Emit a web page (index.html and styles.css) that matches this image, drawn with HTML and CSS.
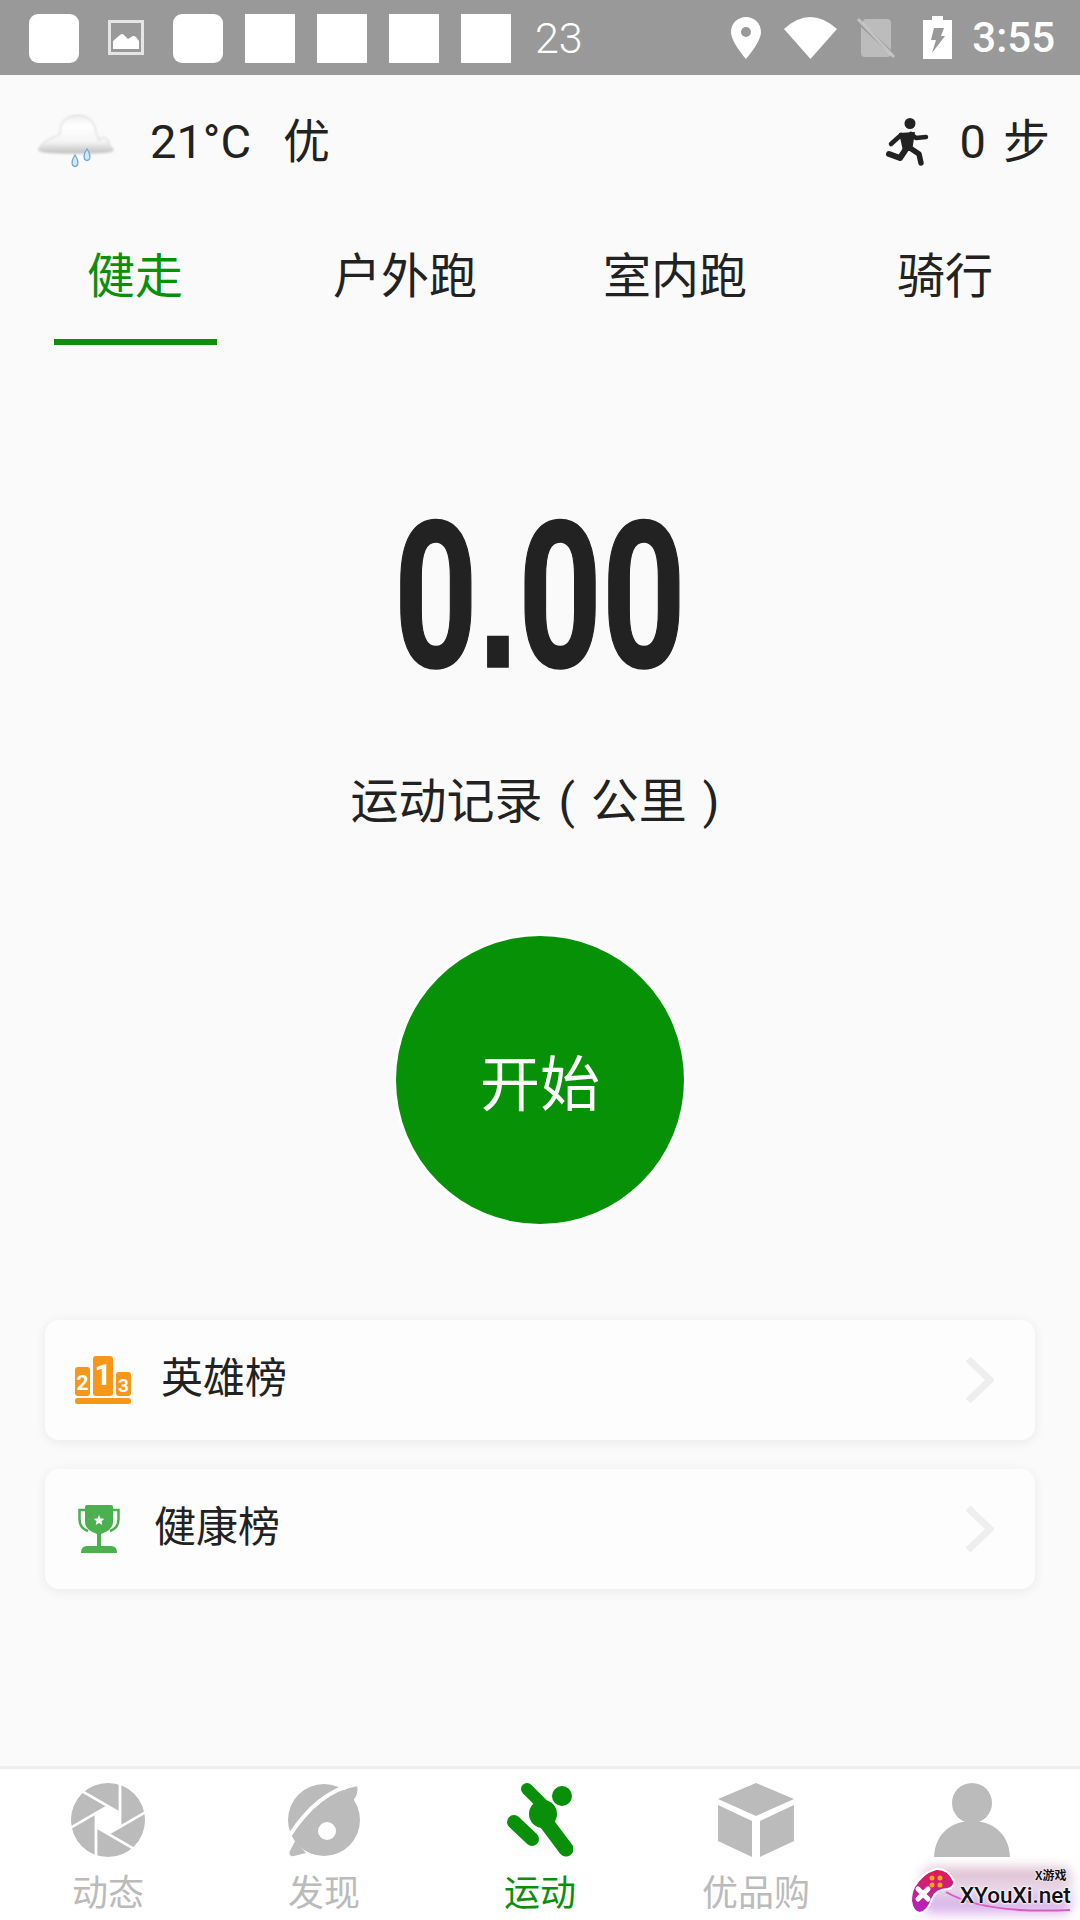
FILE: index.html
```html
<!DOCTYPE html>
<html lang="zh">
<head>
<meta charset="utf-8">
<title>运动</title>
<link rel="stylesheet" href="styles.css">
</head>
<body>
<div class="app">
  <header class="status">
    <div class="notifs">
      <span class="nbox round"></span>
      <svg class="nimg" viewBox="0 0 36 35"><rect x="1.500" y="1.500" width="33" height="32" fill="none" stroke="#fff" stroke-opacity=".75" stroke-width="3"/><path d="M5 29V21L12 15Q14 13 16 15L20 19L24 16.500Q26 15.500 28 17L31 21V29Z" fill="#fff"/></svg>
      <span class="nbox round"></span>
      <span class="nbox"></span><span class="nbox"></span><span class="nbox"></span><span class="nbox"></span>
      <span class="ncount">23</span>
    </div>
    <div class="sys">
      <svg class="pin" viewBox="0 0 30 42"><path fill-rule="evenodd" d="M15 0C6.700 0 0 6.600 0 15C0 25 15 42 15 42S30 25 30 15C30 6.600 23.300 0 15 0ZM15 10A5 5 0 1 1 15 20A5 5 0 1 1 15 10Z" fill="#fff"/></svg>
      <svg class="wifi" viewBox="0 0 53 42"><path d="M0 12Q26 -12 53 12L26.500 42Z" fill="#fff"/></svg>
      <svg class="nosim" viewBox="0 0 40 42"><path d="M7 5Q7 2 10 2H31Q35 2 35 6V33L7 6ZM5 10L35 38Q34 40 31 40H9Q5 40 5 36Z" fill="#fff" fill-opacity=".35"/><path d="M2 2L38 40" stroke="#fff" stroke-opacity=".4" stroke-width="3"/></svg>
      <svg class="batt" viewBox="0 0 29 43"><path d="M9 0H20V4H29V43H0V4H9Z" fill="#fff"/><path d="M11 12H21L18 20H22L9 37L13 24H8Z" fill="#999"/></svg>
      <span class="clock">3:55</span>
    </div>
  </header>

  <main class="main">
    <section class="info">
      <div class="info-left">
        <svg class="cloud" viewBox="0 0 78 57">
          <defs>
            <linearGradient id="cg" gradientUnits="userSpaceOnUse" x1="0" y1="0" x2="0" y2="40"><stop offset="0" stop-color="#ececec"/><stop offset=".3" stop-color="#fff"/><stop offset=".7" stop-color="#f4f4f4"/><stop offset="1" stop-color="#bdbdbd"/></linearGradient>
            <filter id="cb" x="-10%" y="-10%" width="120%" height="120%"><feGaussianBlur stdDeviation=".8"/></filter>
          </defs>
          <g filter="url(#cb)" fill="url(#cg)">
            <path d="M1 36Q6 27 15 24Q20 22 23 20Q22 2 41 1Q58 2 59 19Q62 23 62 27Q66 20 71 26Q72 32 77 36Q74 39 62 39Q40 40 16 39Q5 39 1 36Z" stroke="#d2d2d2" stroke-width="1"/>
          </g>
          <path d="M50 35Q46 41 47.500 45Q50 48 52.500 45Q54 41 50 35Z" fill="#d4e6f5" stroke="#6fa8d6" stroke-width="1.300"/>
          <path d="M38 41Q34 47 35.500 51Q38 54 40.500 51Q42 47 38 41Z" fill="#d4e6f5" stroke="#6fa8d6" stroke-width="1.300"/>
        </svg>
        <span class="info-text">21°C</span>
        <span class="info-text">优</span>
      </div>
      <div class="info-right">
        <svg class="runner" viewBox="0 0 44 48">
          <circle cx="25" cy="5.500" r="5.500" fill="#222"/>
          <path d="M14 15L30 14L27 33L18 33Z" fill="#222"/>
          <path d="M26 16L31 20L41 19" fill="none" stroke="#222" stroke-width="4.500" stroke-linecap="round" stroke-linejoin="round"/>
          <path d="M16 17L6 26" fill="none" stroke="#222" stroke-width="4.500" stroke-linecap="round"/>
          <path d="M25 30L34 36L36 45" fill="none" stroke="#222" stroke-width="5.500" stroke-linecap="round" stroke-linejoin="round"/>
          <path d="M21 31L15 40L4 36" fill="none" stroke="#222" stroke-width="6" stroke-linecap="round" stroke-linejoin="round"/>
        </svg>
        <span class="info-text step-num">0</span>
        <span class="info-text">步</span>
      </div>
    </section>

    <nav class="tabs">
      <div class="tab active"><span class="tab-label">健走</span><span class="tab-bar"></span></div>
      <div class="tab"><span class="tab-label">户外跑</span></div>
      <div class="tab"><span class="tab-label">室内跑</span></div>
      <div class="tab"><span class="tab-label">骑行</span></div>
    </nav>

    <section class="hero">
      <div class="distance"><span class="distance-num">0<span class="distance-dot">.</span>00</span></div>
      <div class="distance-label">运动记录 ( 公里 )</div>
      <div class="start"><span class="start-text">开始</span></div>
    </section>

    <section class="boards">
      <div class="board">
        <svg class="podium" viewBox="0 0 56 48">
          <rect x="0" y="11" width="15" height="29" rx="3" fill="#f7971a"/>
          <rect x="18" y="0" width="20" height="40" rx="3" fill="#f7971a"/>
          <rect x="41" y="16" width="15" height="24" rx="3" fill="#f7971a"/>
          <rect x="0" y="42" width="56" height="6" rx="2.500" fill="#f7971a"/>
          <text class="podium-n" x="7.500" y="34">2</text>
          <text class="podium-n large" x="28" y="29">1</text>
          <text class="podium-n small" x="48.500" y="36">3</text>
        </svg>
        <span class="board-text">英雄榜</span>
        <svg class="chev" viewBox="0 0 28 46"><path d="M2 2L24 23L2 44" fill="none" stroke="#eee" stroke-width="7"/></svg>
      </div>
      <div class="board">
        <svg class="trophy" viewBox="0 0 42 48">
          <path d="M9 5H1.500V14Q1.500 23 10 26M33 5H40.500V14Q40.500 23 32 26" fill="none" stroke="#4caf50" stroke-width="2.500"/>
          <path d="M7 2Q7 0 9 0H33Q35 0 35 2V17Q35 25 23 29V41H19V29Q7 25 7 17Z" fill="#4caf50"/>
          <path d="M3 48Q3 41 9 41H33Q39 41 39 48Z" fill="#4caf50"/>
          <path d="M21 10L22.600 13.400L26.300 13.800L23.500 16.300L24.300 20L21 18.100L17.700 20L18.500 16.300L15.700 13.800L19.400 13.400Z" fill="#fff"/>
        </svg>
        <span class="board-text">健康榜</span>
        <svg class="chev" viewBox="0 0 28 46"><path d="M2 2L24 23L2 44" fill="none" stroke="#eee" stroke-width="7"/></svg>
      </div>
    </section>
  </main>

  <footer class="tabbar">
    <div class="nav">
      <svg class="nav-icon" viewBox="-37 -37 74 74">
        <circle r="37" fill="#bbb"/>
        <g stroke="#fff" stroke-width="2.800">
          <path d="M12 -38V5"/><path d="M12 -38V5" transform="rotate(60)"/><path d="M12 -38V5" transform="rotate(120)"/><path d="M12 -38V5" transform="rotate(180)"/><path d="M12 -38V5" transform="rotate(240)"/><path d="M12 -38V5" transform="rotate(300)"/>
        </g>
        <path d="M0 -13.900L12 -6.900V6.900L0 13.900L-12 6.900V-6.900Z" fill="#fff"/>
      </svg>
      <span class="nav-label">动态</span>
    </div>
    <div class="nav">
      <svg class="nav-icon" viewBox="0 0 72 74">
        <circle cx="36" cy="37" r="36" fill="#bbb"/>
        <path d="M56 7L65 2Q70 1 69.500 7Q69 13 65 18Z" fill="#bbb"/>
        <path d="M7 58L18 70L6 73Q1 74 1.500 69Z" fill="#bbb"/>
        <path d="M0 55Q30 7 70 1" fill="none" stroke="#fff" stroke-width="4"/>
        <circle cx="39" cy="48" r="9" fill="#fff"/>
      </svg>
      <span class="nav-label">发现</span>
    </div>
    <div class="nav current">
      <svg class="nav-icon" viewBox="0 0 66 74">
        <g fill="none" stroke="#0a8f0a" stroke-linecap="round">
          <path d="M20 6L42 28" stroke-width="12"/>
          <path d="M7 39L25 56" stroke-width="14"/>
          <path d="M35 34L59 66" stroke-width="15"/>
        </g>
        <circle cx="36" cy="31" r="14" fill="#0a8f0a"/>
        <circle cx="55" cy="13" r="10" fill="#0a8f0a"/>
      </svg>
      <span class="nav-label">运动</span>
    </div>
    <div class="nav">
      <svg class="nav-icon" viewBox="0 0 76 74">
        <path d="M38 0L76 16L38 33L0 16Z" fill="#bbb"/>
        <path d="M0 22L34 38V74L0 58Z" fill="#bbb"/>
        <path d="M76 22L42 38V74L76 58Z" fill="#bbb"/>
      </svg>
      <span class="nav-label">优品购</span>
    </div>
    <div class="nav">
      <svg class="nav-icon" viewBox="0 0 76 74">
        <circle cx="38" cy="20" r="20" fill="#bbb"/>
        <path d="M0 74C1 50 18 38 38 38S75 50 76 74Z" fill="#bbb"/>
      </svg>
    </div>
  </footer>

  <aside class="mark">
    <div class="mark-glow"></div>
    <svg class="mark-arc" viewBox="0 0 130 30"><path d="M2 4Q40 26 126 22" fill="none" stroke="#d85cc0" stroke-width="2"/></svg>
    <svg class="mark-pad" viewBox="0 0 46 48">
      <defs><linearGradient id="pg" x1="0" y1="0" x2="0" y2="1"><stop offset="0" stop-color="#e01c50"/><stop offset="1" stop-color="#b323c8"/></linearGradient></defs>
      <path d="M4 20Q12 6 26 2Q38 1 44 14Q45 20 38 22Q26 22 22 32Q18 44 10 46Q3 46 1 34Q1 26 4 20Z" fill="url(#pg)" stroke="#fff" stroke-width="2"/>
      <circle cx="22" cy="11" r="2.500" fill="#f9a51a"/><circle cx="30" cy="11" r="2.500" fill="#f9a51a"/><circle cx="22" cy="18" r="2.500" fill="#f9a51a"/><circle cx="30" cy="18" r="2.500" fill="#f9a51a"/>
      <path d="M8 22L18 32M18 22L8 32" stroke="#fff" stroke-width="5" stroke-linecap="round"/>
    </svg>
    <span class="mark-small">X游戏</span>
    <span class="mark-name">XYouXi.net</span>
  </aside>
</div>
</body>
</html>
```
FILE: styles.css
```css
* { box-sizing: border-box; }
html, body { margin: 0; padding: 0; }
body { width: 1080px; height: 1920px; overflow: hidden; background: #fafafa; font-family: Roboto, "Noto Sans CJK SC", sans-serif; color: #222; }
.app { position: relative; display: flex; flex-direction: column; width: 1080px; height: 1920px; }

/* status bar */
.status { display: flex; justify-content: space-between; height: 75px; flex: none; background: #999; padding: 0 25px 0 29px; align-items: center; }
.notifs { display: flex; align-items: center; }
.nbox { width: 50px; height: 49px; margin-right: 22px; margin-top: 1px; background: #fff; }
.nbox.round { border-radius: 9px; }
.nimg { width: 36px; height: 35px; margin: 0 29px 0 0; }
.notifs > .nbox.round:first-child { margin-right: 29px; }
.ncount { font-size: 43px; font-weight: 300; color: #fff; margin-left: 2px; line-height: 1; margin-top: 2px; }
.sys { display: flex; align-items: center; }
.pin { width: 30px; height: 42px; margin-right: 23px; }
.wifi { width: 53px; height: 42px; margin-right: 19px; }
.nosim { width: 40px; height: 42px; margin-right: 27px; }
.batt { width: 29px; height: 43px; margin-right: 20px; }
.clock { font-size: 42px; font-weight: 500; color: #fff; line-height: 1; }

.main { flex: 1; display: flex; flex-direction: column; }

/* weather + steps */
.info { display: flex; justify-content: space-between; align-items: center; height: 134px; padding: 0 30px 0 37px; }
.info-left, .info-right { display: flex; align-items: center; }
.cloud { width: 78px; height: 57px; margin-right: 35px; }
.info-text { font-size: 47px; line-height: 46px; color: #222; }
.info-left .info-text + .info-text { margin-left: 32px; }
.runner { width: 44px; height: 48px; margin-right: 31px; }
.step-num { margin-right: 17px; }

/* tabs */
.tabs { display: grid; grid-template-columns: repeat(4, 1fr); height: 136px; }
.tab { display: flex; flex-direction: column; align-items: center; justify-content: space-between; padding-top: 44px; }
.tab-label { font-size: 48px; line-height: 48px; color: #222; }
.active .tab-label { color: #0a8f0a; }
.tab-bar { width: 163px; height: 6px; background: #0a8f0a; }

/* hero */
.hero { display: flex; flex-direction: column; align-items: center; }
.distance { margin-top: 173px; height: 156px; line-height: 156px; }
.distance-num { display: inline-block; font-size: 204px; font-weight: 700; color: #222; transform: scaleX(.715); line-height: 156px; -webkit-text-stroke: 1.500px #222; }
.distance-dot { font-family: "Liberation Sans", sans-serif; }
.distance-label { margin: 104px 10px 0 0; font-size: 48px; line-height: 48px; color: #222; white-space: pre; word-spacing: 4px; }
.start { margin-top: 110px; width: 288px; height: 288px; border-radius: 50%; background: #079107; display: flex; align-items: center; justify-content: center; box-shadow: 0 0 0 3px #fff; }
.start-text { font-size: 60px; line-height: 60px; color: #fff; margin-top: 11px; }

/* boards */
.boards { display: flex; flex-direction: column; gap: 29px; margin: 96px 45px 0; }
.board { display: flex; align-items: center; height: 120px; background: #fdfdfd; border-radius: 14px; box-shadow: 0 2px 12px rgba(0,0,0,.07); padding: 0 41px 0 30px; }
.podium { width: 56px; height: 48px; margin-right: 30px; }
.podium-n { font: 700 21px Roboto, sans-serif; fill: #fff; text-anchor: middle; }
.podium-n.large { font-size: 30px; }
.podium-n.small { font-size: 19px; }
.trophy { width: 42px; height: 48px; margin: 0 34px 0 3px; }
.board-text { font-size: 42px; line-height: 42px; color: #222; flex: 1; margin-top: -3px; }
.chev { width: 28px; height: 46px; }

/* bottom nav */
.tabbar { display: grid; grid-template-columns: repeat(5, 1fr); height: 154px; flex: none; background: #fff; border-top: 3px solid #eee; padding-top: 14px; }
.nav { display: flex; flex-direction: column; align-items: center; }
.nav-icon { height: 74px; width: auto; }
.nav-label { margin-top: 19px; font-size: 36px; line-height: 36px; color: #bbb; }
.current .nav-label { color: #0a8f0a; }

/* watermark */
.mark { position: absolute; right: 0; bottom: 0; width: 172px; height: 60px; }
.mark-glow { position: absolute; left: 14px; right: 8px; top: 8px; bottom: 6px; border-radius: 10px; background: linear-gradient(180deg, #cfa0bc 0%, #ecdcea 45%, #c8a8e0 75%, #e4a8f0 100%); filter: blur(6px); opacity: .85; }
.mark-arc { position: absolute; left: 36px; top: 28px; width: 130px; height: 30px; }
.mark-pad { position: absolute; left: 2px; top: 7px; width: 46px; height: 48px; }
.mark-small { position: absolute; left: 127px; top: 6px; font: 700 12px "Noto Sans CJK SC", sans-serif; color: #111; text-shadow: 0 0 2px #fff, 0 0 2px #fff; }
.mark-name { position: absolute; left: 52px; top: 20px; font: 500 22.500px/30px Roboto, sans-serif; color: #111; text-shadow: 0 0 2px #fff, 0 0 3px #fff, 0 0 3px #fff; white-space: nowrap; }
```
